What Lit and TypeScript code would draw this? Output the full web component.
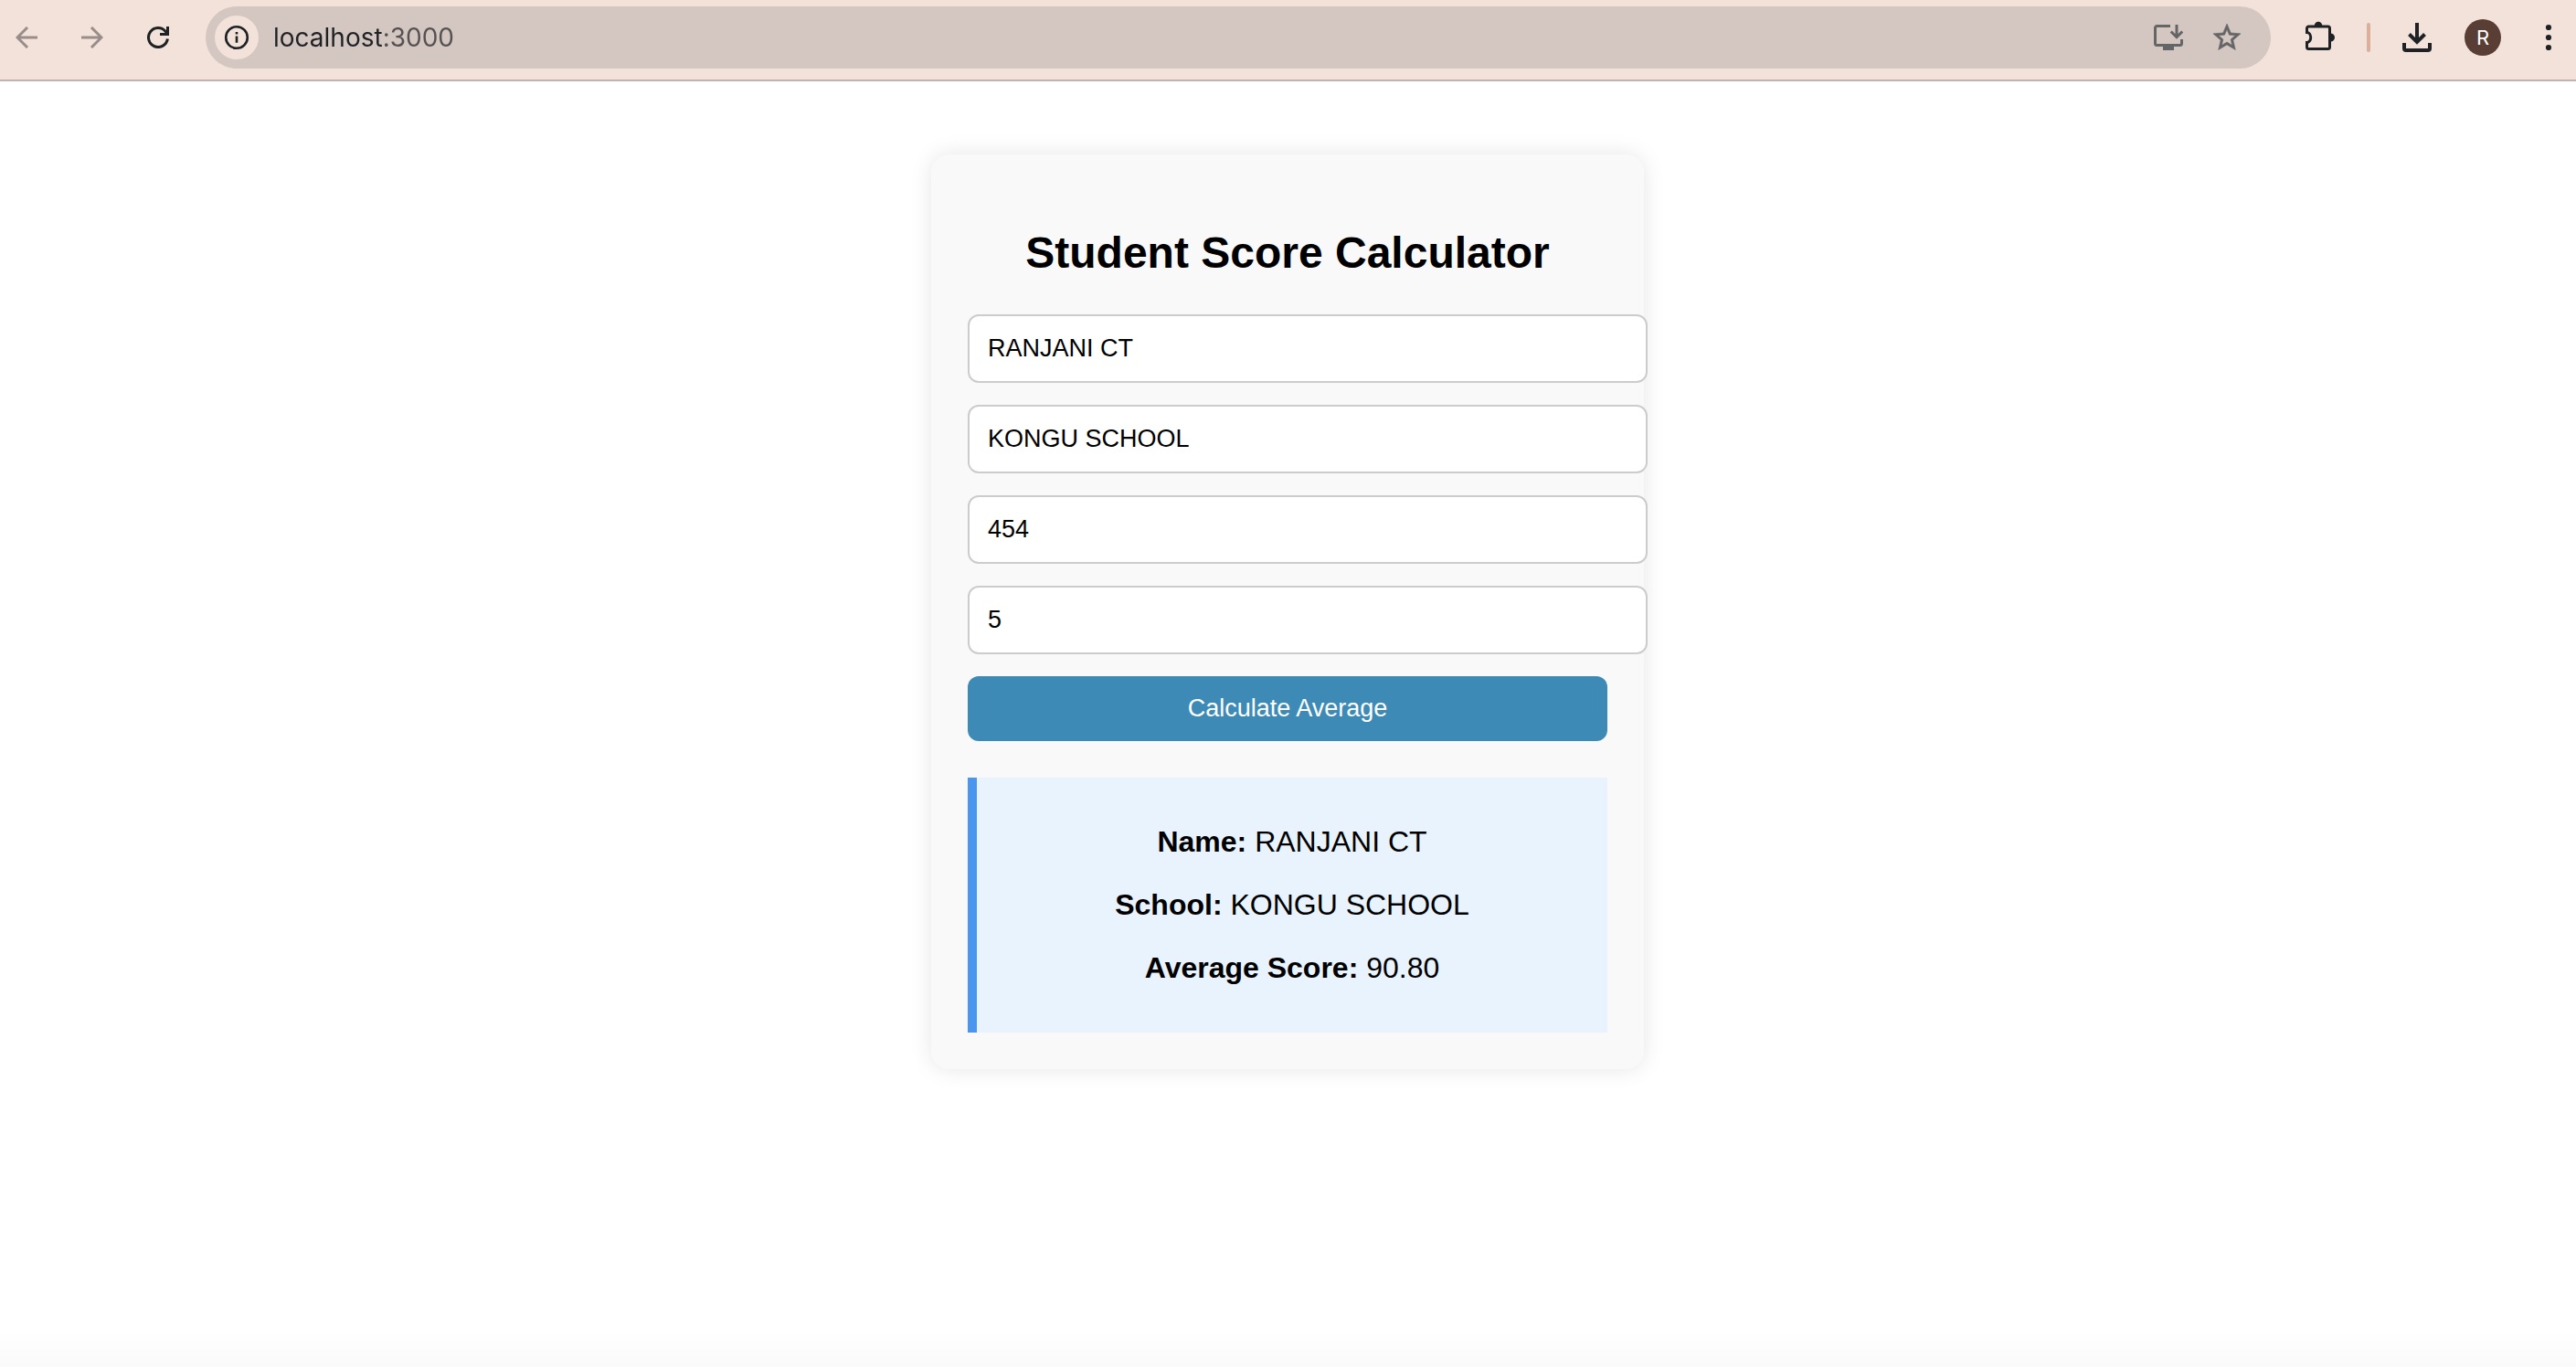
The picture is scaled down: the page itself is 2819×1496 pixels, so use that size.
import { LitElement, html, css } from "lit";
import { customElement, state } from "lit/decorators.js";

@customElement("browser-toolbar")
export class BrowserToolbar extends LitElement {
  static styles = css`
    :host {
      display: flex;
      align-items: center;
      box-sizing: border-box;
      padding: 7px 2px 12px 1px;
      background: #f2e2da;
      border-bottom: 2px solid #c2b3b0;
      color: #1f2225;
    }
    .group {
      display: flex;
      align-items: center;
      gap: 16px;
    }
    button {
      display: grid;
      place-items: center;
      width: 56px;
      height: 56px;
      padding: 0;
      border: 0;
      border-radius: 50%;
      background: none;
      color: inherit;
    }
    button:disabled {
      color: #998d8b;
    }
    svg {
      display: block;
      fill: none;
      stroke: currentColor;
    }
    .bar {
      flex: 1;
      min-width: 0;
      display: flex;
      align-items: center;
      gap: 16px;
      box-sizing: border-box;
      height: 68px;
      margin: 0 26px 0 24px;
      padding: 0 24px 0 10px;
      border-radius: 34px;
      background: #d4c6c0;
    }
    .bar button {
      width: 48px;
      height: 48px;
      color: #646566;
    }
    .bar .info {
      background: #f2e2da;
      color: #1f2225;
    }
    .url {
      flex: 1;
      min-width: 0;
      padding: 0;
      border: 0;
      outline: 0;
      font: 28px/36px Inter, "Liberation Sans", sans-serif;
      color: transparent;
      background: linear-gradient(90deg, #1f2225 119px, #555150 119px);
      background-clip: text;
      -webkit-background-clip: text;
    }
    .divider {
      width: 4px;
      height: 32px;
      margin: 0 7px;
      border-radius: 2px;
      background: #dcae9c;
    }
    .avatar {
      display: grid;
      place-items: center;
      width: 40px;
      height: 40px;
      border-radius: 50%;
      background: #593e36;
      color: #fff;
      font: 22px/40px Inter, "Liberation Sans", sans-serif;
    }
  `;

  render() {
    return html`
      <div class="group">
        <button aria-label="Back" disabled>
          <svg width="24" height="24" viewBox="0 0 24 24" stroke-width="3">
            <path d="M24 12H2M13 1 2 12l11 11" />
          </svg>
        </button>
        <button aria-label="Forward" disabled>
          <svg width="24" height="24" viewBox="0 0 24 24" stroke-width="3">
            <path d="M0 12h22M11 1l11 11-11 11" />
          </svg>
        </button>
        <button aria-label="Reload">
          <svg width="24" height="24" viewBox="0 0 24 24" stroke-width="3">
            <path d="M22.4 13.5A10.5 10.5 0 1 1 20 5.2L22 8" />
            <path d="M22.5 0v8.5H14" />
          </svg>
        </button>
      </div>
      <div class="bar">
        <button class="info" aria-label="View site information">
          <svg width="28" height="28" viewBox="0 0 28 28" stroke-width="2.6">
            <circle cx="14" cy="14" r="11.8" />
            <path d="M14 12.6v7.2M14 8v2.6" />
          </svg>
        </button>
        <input class="url" type="text" aria-label="Address" value="localhost:3000" />
        <button aria-label="Install app">
          <svg width="32" height="32" viewBox="0 0 32 32" stroke-width="3">
            <path d="M18 3.500H3.500a2 2 0 0 0-2 2v17a2 2 0 0 0 2 2h25a2 2 0 0 0 2-2V18" />
            <path d="M25 2v13.500M18.800 9.500l6.200 6.200 6.200-6.200" />
            <path d="M10 25h12v5H10z" fill="currentColor" stroke="none" />
          </svg>
        </button>
        <button aria-label="Bookmark this tab">
          <svg width="36" height="36" viewBox="0 0 24 24" stroke-width="0.4">
            <path
              d="M22 9.240l-7.190-.620L12 2 9.190 8.630 2 9.240l5.460 4.730L5.820 21 12 17.270 18.180 21l-1.630-7.030L22 9.240zM12 15.400l-3.760 2.270 1-4.280-3.320-2.880 4.380-.380L12 6.100l1.710 4.040 4.380.380-3.320 2.880 1 4.280L12 15.400z"
              fill="currentColor"
            />
          </svg>
        </button>
      </div>
      <div class="group">
        <button aria-label="Extensions">
          <svg width="32" height="36" viewBox="0 0 32 36" stroke-width="3">
            <path
              d="M3.500 6h21a2 2 0 0 1 2 2v20.500a2 2 0 0 1-2 2h-21a2 2 0 0 1-2-2V23.500a4.200 5.500 0 0 0 0-11V8a2 2 0 0 1 2-2z"
            />
            <path d="M9.700 5a4.300 4.300 0 0 1 8.600 0zM27.500 13.500a4.500 4.500 0 0 1 0 9z" fill="currentColor" stroke="none" />
          </svg>
        </button>
        <div class="divider"></div>
        <button aria-label="Downloads">
          <svg width="32" height="32" viewBox="0 0 32 32" stroke-width="4">
            <path d="M2 22v6a2 2 0 0 0 2 2h24a2 2 0 0 0 2-2v-6" />
            <path d="M16 0v21M7.500 12.500 16 21l8.500-8.500" />
          </svg>
        </button>
        <button aria-label="Profile"><span class="avatar">R</span></button>
        <button aria-label="Menu">
          <svg width="8" height="32" viewBox="0 0 8 32">
            <g fill="currentColor" stroke="none">
              <circle cx="4" cy="5" r="3.100" />
              <circle cx="4" cy="16" r="3.100" />
              <circle cx="4" cy="27" r="3.100" />
            </g>
          </svg>
        </button>
      </div>
    `;
  }
}

@customElement("score-calculator")
export class ScoreCalculator extends LitElement {
  static styles = css`
    :host {
      display: block;
      box-sizing: border-box;
      width: 100%;
      max-width: 780px;
      padding: 40px;
      border-radius: 20px;
      background: #f9f9f9;
      box-shadow: 0 0 24px rgba(0, 0, 0, 0.1);
      color: #000;
      font-family: "Liberation Sans", Arial, sans-serif;
      text-align: center;
    }
    h1 {
      margin: 40px 0;
      font-size: 48px;
      line-height: 55px;
    }
    form {
      display: flex;
      flex-direction: column;
      gap: 24px;
    }
    input {
      width: 100%;
      padding: 20px;
      border: 2px solid #ccc;
      border-radius: 12px;
      background: #fff;
      color: #000;
      font: 27px/31px "Liberation Sans", Arial, sans-serif;
      height: 31px;
      outline: 0;
    }
    button {
      padding: 20px;
      border: 0;
      border-radius: 12px;
      background: #3d8ab6;
      color: #fff;
      font: 27px/31px "Liberation Sans", Arial, sans-serif;
    }
    .result {
      display: flow-root;
      margin-top: 40px;
      padding: 20px;
      border-left: 10px solid #4a95ee;
      background: #e8f3fd;
      font-size: 32px;
      line-height: 37px;
    }
    .result p {
      margin: 32px 0;
    }
  `;

  @state() private name = "RANJANI CT";
  @state() private school = "KONGU SCHOOL";
  @state() private total = "454";
  @state() private subjects = "5";
  @state() private average = "90.80";

  private calculate(event: Event) {
    event.preventDefault();
    const value = Number(this.total) / Number(this.subjects);
    this.average = Number.isFinite(value) ? value.toFixed(2) : "";
  }

  private text(event: Event) {
    return (event.target as HTMLInputElement).value;
  }

  render() {
    return html`
      <h1>Student Score Calculator</h1>
      <form @submit=${this.calculate}>
        <input aria-label="Name" type="text" .value=${this.name} @input=${(e: Event) => (this.name = this.text(e))} />
        <input aria-label="School" type="text" .value=${this.school} @input=${(e: Event) => (this.school = this.text(e))} />
        <input aria-label="Total marks" type="text" inputmode="numeric" .value=${this.total} @input=${(e: Event) => (this.total = this.text(e))} />
        <input aria-label="Number of subjects" type="text" inputmode="numeric" .value=${this.subjects} @input=${(e: Event) => (this.subjects = this.text(e))} />
        <button type="submit">Calculate Average</button>
      </form>
      <div class="result">
        <p><strong>Name:</strong> ${this.name}</p>
        <p><strong>School:</strong> ${this.school}</p>
        <p><strong>Average Score:</strong> ${this.average}</p>
      </div>
    `;
  }
}

@customElement("app-root")
export class AppRoot extends LitElement {
  static styles = css`
    :host {
      display: flex;
      flex-direction: column;
      min-height: 100vh;
      background: #fff;
    }
    main {
      flex: 1;
      display: flex;
      justify-content: center;
      align-items: flex-start;
      padding: 80px 21px 80px 20px;
      background: linear-gradient(0deg, #fafafa, #fff 40px);
    }
  `;

  render() {
    return html`
      <browser-toolbar></browser-toolbar>
      <main><score-calculator></score-calculator></main>
    `;
  }
}
